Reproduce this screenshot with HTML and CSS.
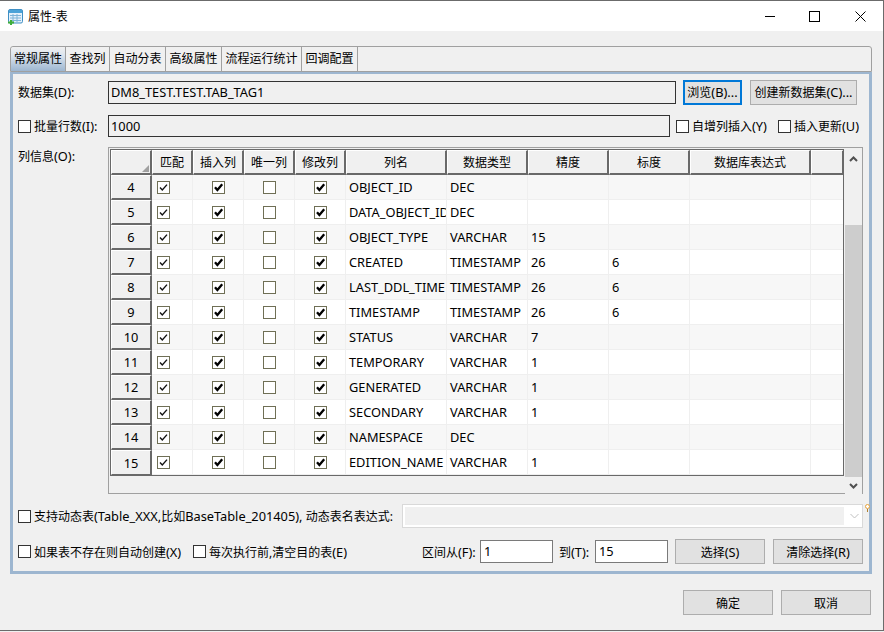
FILE: index.html
```html
<!DOCTYPE html>
<html lang="en">
<head>
  <meta charset="UTF-8" />
  <title>属性-表</title>
  <link rel="stylesheet" href="styles.css">
</head>
<body>
  <svg class="defs" width="0" height="0">
    <symbol id="tick" viewBox="0 0 11 11"><path d="M2 5.2 L4.4 8 L9.2 2.2" fill="none" stroke="#000" stroke-width="2.3"/></symbol>
    <symbol id="tick-thin" viewBox="0 0 11 11"><path d="M2 5.5 L4.3 8 L9 2.6" fill="none" stroke="#111" stroke-width="1.4"/></symbol>
  </svg>

  <div class="window">
    <div class="titlebar">
      <svg class="app-icon" width="17" height="17" viewBox="0 0 17 17">
        <rect x="1.5" y="1.5" width="14" height="13.5" rx="1.5" fill="#e4f1fb" stroke="#3f8fc4"/>
        <rect x="2" y="2" width="13" height="3" fill="#4aa3d8"/>
        <path d="M3 7.5H14M3 10H14M3 12.5H14M6 6V14M10 6V14" stroke="#7db4d8" fill="none"/>
        <path d="M1 14.5H7M4 12V17" stroke="#3fae3a" stroke-width="2" fill="none"/>
      </svg>
      <span class="title">属性-表</span>
      <div class="win-btns">
        <svg class="win-min" width="10" height="10" viewBox="0 0 10 10"><path d="M0 5.5H10" stroke="#000"/></svg>
        <svg class="win-max" width="11" height="11" viewBox="0 0 11 11"><rect x="0.5" y="0.5" width="10" height="10" fill="none" stroke="#000"/></svg>
        <svg class="win-close" width="11" height="11" viewBox="0 0 11 11"><path d="M0.5 0.5L10.5 10.5M10.5 0.5L0.5 10.5" stroke="#000"/></svg>
      </div>
    </div>

    <div class="tabs">
      <div class="tab active">常规属性</div>
      <div class="tab tab-w44">查找列</div>
      <div class="tab">自动分表</div>
      <div class="tab">高级属性</div>
      <div class="tab tab-w80">流程运行统计</div>
      <div class="tab">回调配置</div>
    </div>

    <div class="panel">
      <div class="row row-data">
        <label class="lbl">数据集<span class="en">(D):</span></label>
        <div class="field field-data">DM8_TEST.TEST.TAB_TAG1</div>
        <button class="btn btn-browse">浏览<span class="en">(B)...</span></button>
        <button class="btn btn-create">创建新数据集<span class="en">(C)...</span></button>
      </div>

      <div class="row row-batch">
        <label class="lbl"><span class="cb"></span>批量行数<span class="en">(I):</span></label>
        <div class="field field-batch">1000</div>
        <label class="chk chk-auto"><span class="cb"></span>自增列插入<span class="en">(Y)</span></label>
        <label class="chk"><span class="cb"></span>插入更新<span class="en">(U)</span></label>
      </div>

      <div class="row row-cols">
        <label class="lbl lbl-cols">列信息<span class="en">(O):</span></label>
        <div class="grid-box">
          <div class="grid-wrap">
            <table class="grid">
              <colgroup>
                <col class="c41"><col class="c41"><col class="c51"><col class="c51"><col class="c51">
                <col class="c101"><col class="c81"><col class="c81"><col class="c81"><col class="c121"><col class="c33">
              </colgroup>
              <thead>
                <tr>
                  <th class="corner"></th><th>匹配</th><th>插入列</th><th>唯一列</th><th>修改列</th>
                  <th>列名</th><th>数据类型</th><th>精度</th><th>标度</th><th>数据库表达式</th><th></th>
                </tr>
              </thead>
              <tbody>
                <tr><th>4</th><td><span class="cb small"><svg><use href="#tick-thin"/></svg></span></td><td class="mid"><span class="cb small"><svg><use href="#tick"/></svg></span></td><td class="mid"><span class="cb small"></span></td><td class="mid"><span class="cb small"><svg><use href="#tick"/></svg></span></td><td>OBJECT_ID</td><td>DEC</td><td></td><td></td><td></td><td></td></tr>
                <tr><th>5</th><td><span class="cb small"><svg><use href="#tick-thin"/></svg></span></td><td class="mid"><span class="cb small"><svg><use href="#tick"/></svg></span></td><td class="mid"><span class="cb small"></span></td><td class="mid"><span class="cb small"><svg><use href="#tick"/></svg></span></td><td>DATA_OBJECT_ID</td><td>DEC</td><td></td><td></td><td></td><td></td></tr>
                <tr><th>6</th><td><span class="cb small"><svg><use href="#tick-thin"/></svg></span></td><td class="mid"><span class="cb small"><svg><use href="#tick"/></svg></span></td><td class="mid"><span class="cb small"></span></td><td class="mid"><span class="cb small"><svg><use href="#tick"/></svg></span></td><td>OBJECT_TYPE</td><td>VARCHAR</td><td>15</td><td></td><td></td><td></td></tr>
                <tr><th>7</th><td><span class="cb small"><svg><use href="#tick-thin"/></svg></span></td><td class="mid"><span class="cb small"><svg><use href="#tick"/></svg></span></td><td class="mid"><span class="cb small"></span></td><td class="mid"><span class="cb small"><svg><use href="#tick"/></svg></span></td><td>CREATED</td><td>TIMESTAMP</td><td>26</td><td>6</td><td></td><td></td></tr>
                <tr><th>8</th><td><span class="cb small"><svg><use href="#tick-thin"/></svg></span></td><td class="mid"><span class="cb small"><svg><use href="#tick"/></svg></span></td><td class="mid"><span class="cb small"></span></td><td class="mid"><span class="cb small"><svg><use href="#tick"/></svg></span></td><td>LAST_DDL_TIME</td><td>TIMESTAMP</td><td>26</td><td>6</td><td></td><td></td></tr>
                <tr><th>9</th><td><span class="cb small"><svg><use href="#tick-thin"/></svg></span></td><td class="mid"><span class="cb small"><svg><use href="#tick"/></svg></span></td><td class="mid"><span class="cb small"></span></td><td class="mid"><span class="cb small"><svg><use href="#tick"/></svg></span></td><td>TIMESTAMP</td><td>TIMESTAMP</td><td>26</td><td>6</td><td></td><td></td></tr>
                <tr><th>10</th><td><span class="cb small"><svg><use href="#tick-thin"/></svg></span></td><td class="mid"><span class="cb small"><svg><use href="#tick"/></svg></span></td><td class="mid"><span class="cb small"></span></td><td class="mid"><span class="cb small"><svg><use href="#tick"/></svg></span></td><td>STATUS</td><td>VARCHAR</td><td>7</td><td></td><td></td><td></td></tr>
                <tr><th>11</th><td><span class="cb small"><svg><use href="#tick-thin"/></svg></span></td><td class="mid"><span class="cb small"><svg><use href="#tick"/></svg></span></td><td class="mid"><span class="cb small"></span></td><td class="mid"><span class="cb small"><svg><use href="#tick"/></svg></span></td><td>TEMPORARY</td><td>VARCHAR</td><td>1</td><td></td><td></td><td></td></tr>
                <tr><th>12</th><td><span class="cb small"><svg><use href="#tick-thin"/></svg></span></td><td class="mid"><span class="cb small"><svg><use href="#tick"/></svg></span></td><td class="mid"><span class="cb small"></span></td><td class="mid"><span class="cb small"><svg><use href="#tick"/></svg></span></td><td>GENERATED</td><td>VARCHAR</td><td>1</td><td></td><td></td><td></td></tr>
                <tr><th>13</th><td><span class="cb small"><svg><use href="#tick-thin"/></svg></span></td><td class="mid"><span class="cb small"><svg><use href="#tick"/></svg></span></td><td class="mid"><span class="cb small"></span></td><td class="mid"><span class="cb small"><svg><use href="#tick"/></svg></span></td><td>SECONDARY</td><td>VARCHAR</td><td>1</td><td></td><td></td><td></td></tr>
                <tr><th>14</th><td><span class="cb small"><svg><use href="#tick-thin"/></svg></span></td><td class="mid"><span class="cb small"><svg><use href="#tick"/></svg></span></td><td class="mid"><span class="cb small"></span></td><td class="mid"><span class="cb small"><svg><use href="#tick"/></svg></span></td><td>NAMESPACE</td><td>DEC</td><td></td><td></td><td></td><td></td></tr>
                <tr><th>15</th><td><span class="cb small"><svg><use href="#tick-thin"/></svg></span></td><td class="mid"><span class="cb small"><svg><use href="#tick"/></svg></span></td><td class="mid"><span class="cb small"></span></td><td class="mid"><span class="cb small"><svg><use href="#tick"/></svg></span></td><td>EDITION_NAME</td><td>VARCHAR</td><td>1</td><td></td><td></td><td></td></tr>
              </tbody>
            </table>
          </div>
          <div class="scrollbar">
            <svg class="arrow arrow-up" width="9" height="6" viewBox="0 0 9 6"><path d="M1 5L4.5 1.5L8 5" fill="none" stroke="#505050" stroke-width="2"/></svg>
            <div class="track"><div class="thumb"></div></div>
            <svg class="arrow arrow-down" width="9" height="6" viewBox="0 0 9 6"><path d="M1 1L4.5 4.5L8 1" fill="none" stroke="#505050" stroke-width="2"/></svg>
          </div>
        </div>
      </div>

      <div class="row row-dyn">
        <label class="chk"><span class="cb"></span>支持动态表<span class="en">(Table_XXX,</span>比如<span class="en">BaseTable_201405), </span>&nbsp;动态表名表达式:</label>
        <div class="combo">
          <div class="combo-in"></div>
          <svg width="9" height="6" viewBox="0 0 9 6"><path d="M0.5 1L4.5 5L8.5 1" fill="none" stroke="#c0c0c0"/></svg>
        </div>
        <svg class="bulb" width="5" height="8" viewBox="0 0 5 8"><circle cx="2.5" cy="2.5" r="2" fill="#fff" stroke="#e6a23a"/><path d="M2.5 5V8" stroke="#b08030"/></svg>
      </div>

      <div class="row row-range">
        <label class="chk chk-create"><span class="cb"></span>如果表不存在则自动创建<span class="en">(X)</span></label>
        <label class="chk chk-clear"><span class="cb"></span>每次执行前,清空目的表<span class="en">(E)</span></label>
        <label class="lbl-from">区间从<span class="en">(F):</span></label>
        <div class="num">1</div>
        <label class="lbl-to">到<span class="en">(T):</span></label>
        <div class="num">15</div>
        <button class="btn btn-sel">选择<span class="en">(S)</span></button>
        <button class="btn btn-sel">清除选择<span class="en">(R)</span></button>
      </div>
    </div>

    <div class="footer">
      <button class="btn btn-foot">确定</button>
      <button class="btn btn-foot">取消</button>
    </div>
  </div>
</body>
</html>
```

FILE: styles.css
```css
* {
  box-sizing: border-box;
}

html, body {
  margin: 0;
  padding: 0;
  height: 632px;
  overflow: hidden;
  background-color: #f0f0f0;
  font-family: "Noto Sans", "Noto Sans CJK SC", sans-serif;
  font-size: 12px;
  color: #000;
}

.defs {
  position: absolute;
}

/* latin runs are a bit wider in the original font */
.en {
  font-size: 12.8px;
}

.window {
  width: 884px;
  height: 631px;
  border-top: 1px solid #6b6b6b;
  border-right: 1px solid #6b6b6b;
  border-bottom: 1px solid #6b6b6b;
  background: #f0f0f0;
}

.titlebar {
  display: flex;
  align-items: center;
  height: 30px;
  background: #fff;
  padding-left: 7px;
}

.title {
  margin-left: 4px;
  font-size: 12px;
}

.win-btns {
  margin-left: auto;
  display: flex;
  align-items: center;
}

.win-min {
  margin-right: 34px;
}

.win-max {
  margin-right: 35px;
}

.win-close {
  margin-right: 17px;
}

/* tabs */
.tabs {
  display: flex;
  margin: 15px 0 0 10px;
  width: 862px;
  height: 26px;
  border: 1px solid #a0a0a0;
  border-radius: 3px 3px 0 0;
}

.tab {
  width: 56px;
  line-height: 24px;
  text-align: center;
  border-right: 1px solid #a0a0a0;
  white-space: nowrap;
}

.tab-w44 {
  width: 44px;
}

.tab-w80 {
  width: 80px;
}

.tab.active {
  width: 55px;
  border-radius: 3px 0 0 0;
  background: linear-gradient(#f0f0f0 0%, #dbe4ee 35%, #9db6d0 100%);
}

/* main panel */
.panel {
  margin-left: 10px;
  width: 862px;
  height: 502px;
  border: 3px solid #9db6d0;
  border-top-width: 2px;
  padding-left: 5px;
  padding-right: 6px;
}

.row {
  display: flex;
  align-items: center;
}

.row-data {
  height: 24px;
  margin-top: 6px;
}

.row-batch {
  height: 22px;
  margin-top: 11px;
}

.row-cols {
  height: 347px;
  margin-top: 10px;
  align-items: flex-start;
}

.row-dyn {
  position: relative;
  height: 24px;
  margin-top: 10px;
}

.row-range {
  height: 25px;
  margin-top: 11px;
}

.lbl {
  display: flex;
  align-items: center;
  width: 90px;
  flex: none;
  white-space: nowrap;
}

.chk {
  display: flex;
  flex: none;
  align-items: center;
  white-space: nowrap;
}

.cb {
  display: inline-block;
  flex: none;
  width: 13px;
  height: 13px;
  margin-right: 3px;
  border: 1px solid #333;
  background: #fff;
}

.cb.small {
  display: block;
  margin: 0;
  border-color: #6f6f55;
}

.cb svg {
  display: block;
  width: 11px;
  height: 11px;
}

.field {
  height: 22px;
  line-height: 20px;
  padding-left: 2px;
  border: 1px solid #333;
  background: #f0f0f0;
  font-size: 12.8px;
  white-space: nowrap;
}

.field-data {
  width: 568px;
  height: 23px;
  line-height: 21px;
}

.field-batch {
  width: 562px;
  flex: none;
}

.chk-auto {
  width: 102px;
  margin-left: 6px;
}

.btn {
  height: 25px;
  padding: 0;
  border: 1px solid #adadad;
  background: #e1e1e1;
  font-family: inherit;
  font-size: 12px;
  color: #000;
  white-space: nowrap;
}

.btn-browse {
  width: 59px;
  margin-left: 7px;
  border: 2px solid #0078d7;
}

.btn-create {
  width: 107px;
  margin-left: 8px;
}

/* column grid */
.grid-box {
  display: flex;
  width: 755px;
  height: 347px;
  border: 1px solid #a0a0a0;
  padding: 1px 0 0 1px;
}

.grid-wrap {
  width: 735px;
  height: 327px;
  border: 1px solid #696969;
  background: #fff;
  overflow: hidden;
}

.grid {
  table-layout: fixed;
  border-collapse: separate;
  border-spacing: 0;
  width: 733px;
}

.c41 { width: 41px; }
.c51 { width: 51px; }
.c81 { width: 81px; }
.c101 { width: 101px; }
.c121 { width: 121px; }
.c33 { width: 33px; }

.grid th {
  height: 25px;
  padding: 0;
  font-weight: normal;
  text-align: center;
  background: #f0f0f0;
  border-top: 1px solid #fff;
  border-left: 1px solid #fff;
  border-right: 2px solid #696969;
  border-bottom: 2px solid #696969;
}

.grid tbody th {
  font-size: 12.8px;
}

.grid td {
  height: 25px;
  padding: 0 0 0 3px;
  border-right: 1px solid #efefef;
  border-bottom: 1px solid #efefef;
  font-size: 12.8px;
  white-space: nowrap;
  overflow: hidden;
}

.grid td:nth-child(2) {
  padding-left: 5px;
}

.grid td.mid {
  padding-left: 0;
}

.grid td.mid .cb {
  margin: 0 auto;
}

.grid tbody tr:nth-child(odd) td {
  background: #f7f7f7;
}

.grid tbody tr:last-child th {
  border-bottom: 1px solid #696969;
}

.corner {
  position: relative;
}

.corner::after {
  content: "";
  position: absolute;
  right: 1px;
  bottom: 1px;
  border-left: 7px solid transparent;
  border-bottom: 7px solid #a0a0a0;
}

.scrollbar {
  display: flex;
  flex-direction: column;
  align-items: center;
  width: 17px;
  height: 345px;
  margin-left: 1px;
  background: #f0f0f0;
}

.scrollbar .arrow {
  flex: none;
}

.arrow-up {
  margin: 7px 0 6px;
}

.arrow-down {
  margin: 6px 0 5px;
}

.track {
  flex: 1;
  width: 100%;
  padding-top: 57px;
}

.thumb {
  height: 252px;
  background: #cdcdcd;
}

/* dynamic table row */
.combo {
  display: flex;
  align-items: center;
  width: 461px;
  height: 24px;
  margin-left: auto;
  padding: 2px;
  border: 1px solid #d9d9d9;
  background: #fff;
}

.combo-in {
  width: 439px;
  height: 18px;
  background: #f0f0f0;
}

.combo svg {
  margin-left: 6px;
}

.bulb {
  position: absolute;
  right: -7px;
  top: 0;
}

/* range row */
.chk-create {
  width: 175px;
}

.chk-clear {
  width: 229px;
}

.lbl-from {
  flex: none;
  width: 58px;
  white-space: nowrap;
}

.lbl-to {
  flex: none;
  width: 36px;
  margin-left: 6px;
  white-space: nowrap;
}

.num {
  flex: none;
  width: 73px;
  height: 23px;
  line-height: 21px;
  padding-left: 3px;
  border: 1px solid #7a7a7a;
  background: #fff;
  font-size: 12.8px;
}

.btn-sel {
  flex: none;
  width: 90px;
  margin-left: 8px;
}

.num + .btn-sel {
  margin-left: 7px;
}

/* bottom buttons */
.footer {
  display: flex;
  justify-content: flex-end;
  gap: 8px;
  margin-top: 16px;
  padding-right: 12px;
}

.btn-foot {
  width: 90px;
}
```
